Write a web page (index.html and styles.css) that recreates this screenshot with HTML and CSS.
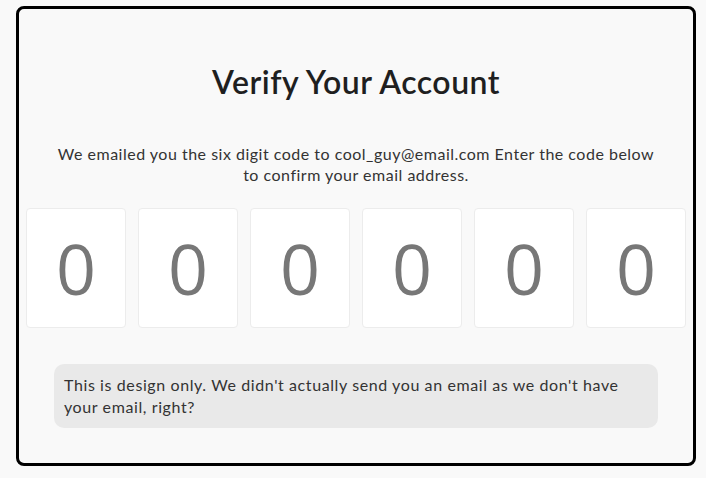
FILE: index.html
```html
<!DOCTYPE html>
<html lang="en">
<head>
<meta charset="utf-8">
<title>Verify Your Account</title>
<link rel="stylesheet" href="styles.css">
</head>
<body>
<main class="card">
  <h1 class="title">Verify Your Account</h1>
  <p class="lead">We emailed you the six digit code to cool_guy@email.com Enter the code below to confirm your email address.</p>
  <div class="code">
    <div class="digit">0</div>
    <div class="digit">0</div>
    <div class="digit">0</div>
    <div class="digit">0</div>
    <div class="digit">0</div>
    <div class="digit">0</div>
  </div>
  <div class="note">This is design only. We didn't actually send you an email as we don't have your email, right?</div>
</main>
</body>
</html>
```

FILE: styles.css
```css
html, body {
  margin: 0;
  padding: 0;
  background: #f9f9f9;
}
body {
  padding: 6px 10px 0 16px;
  font-family: "Lato", "Noto Sans", sans-serif;
  color: #2b2b2b;
}
.card {
  box-sizing: border-box;
  width: 680px;
  height: 460px;
  border: 3px solid #000;
  border-radius: 8px;
  background: #f9f9f9;
  padding: 0 7px;
  display: flex;
  flex-direction: column;
  align-items: center;
}
.title {
  margin: 53px 0 0;
  font-size: 32px;
  font-weight: 600;
  line-height: 40px;
  letter-spacing: 0.5px;
  color: #1f1f1f;
}
.lead {
  margin: 41px 0 0;
  padding: 0 28px;
  font-size: 16px;
  line-height: 21px;
  letter-spacing: 0.5px;
  text-align: center;
  color: #333;
}
.code {
  margin-top: 23px;
  display: flex;
  gap: 12px;
}
.digit {
  box-sizing: border-box;
  width: 100px;
  height: 120px;
  background: #fff;
  border: 1px solid #ececec;
  border-radius: 4px;
  display: flex;
  align-items: center;
  justify-content: center;
  font-family: "Open Sans", "Noto Sans", sans-serif;
  font-size: 70px;
  color: #777;
}
.note {
  box-sizing: border-box;
  margin-top: 36px;
  width: 604px;
  padding: 10px 10px;
  background: #e9e9e9;
  border-radius: 10px;
  font-size: 16px;
  line-height: 22px;
  letter-spacing: 0.6px;
  color: #333;
}
```
